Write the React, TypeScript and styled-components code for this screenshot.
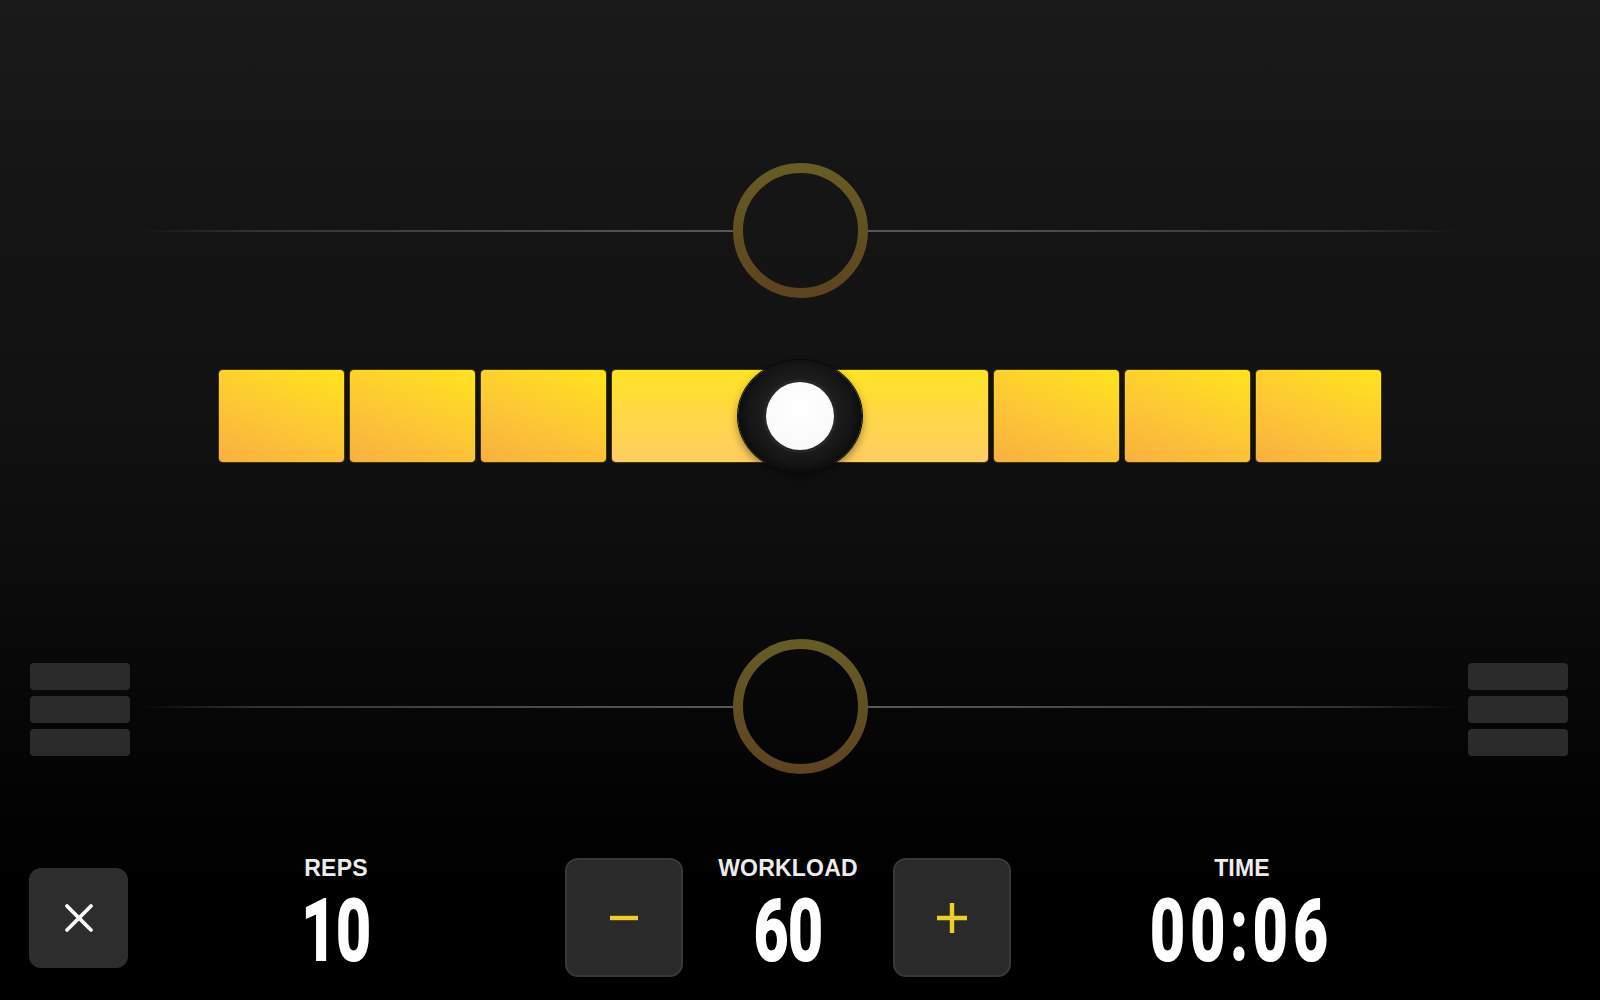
import React, { useId } from 'react';
import styled, { createGlobalStyle } from 'styled-components';

const GlobalStyle = createGlobalStyle`
  html, body {
    margin: 0;
    padding: 0;
    background: #000;
  }
  body {
    font-family: 'Liberation Sans', Arial, sans-serif;
  }
`;

const Screen = styled.main`
  width: 1600px;
  height: 1000px;
  overflow: hidden;
  display: flex;
  flex-direction: column;
  padding-top: 163px;
  box-sizing: border-box;
  background: linear-gradient(
    180deg,
    #1a1a1a 0%,
    #151515 18%,
    #121212 40%,
    #0d0d0d 55%,
    #070707 70%,
    #020202 82%,
    #000 90%
  );
`;

/* ring + guide line row */
const Track = styled.section<{ $offset?: number }>`
  display: grid;
  grid-template-columns: 140px 1fr 135px 1fr 140px;
  align-items: center;
  height: 135px;
  margin-top: ${p => p.$offset ?? 0}px;
`;

const GuideLine = styled.div<{ $side: 'left' | 'right' }>`
  height: 2px;
  background: linear-gradient(
    ${p => (p.$side === 'left' ? '90deg' : '270deg')},
    rgba(80, 80, 80, 0) 0%,
    #333 20%,
    #4c4c4c 70%,
    #585858 100%
  );
`;

const SideStack = styled.div<{ $side: 'left' | 'right' }>`
  display: flex;
  flex-direction: column;
  gap: 6px;
  width: 100px;
  justify-self: ${p => (p.$side === 'left' ? 'start' : 'end')};
  margin: ${p => (p.$side === 'left' ? '6px 0 0 30px' : '6px 32px 0 0')};
`;

const StackPlate = styled.div`
  height: 27px;
  border-radius: 4px;
  background: #2b2b2b;
`;

/* level bar */
const BarRow = styled.section`
  position: relative;
  display: flex;
  justify-content: center;
  align-items: center;
  gap: 6px;
  height: 112px;
  margin-top: 62px;
`;

const Segment = styled.div<{ $width: number; $active?: boolean }>`
  width: ${p => p.$width}px;
  height: 92px;
  border-radius: 4px;
  box-shadow: 0 0 0 1px rgba(110, 84, 10, 0.55);
  background: ${p =>
    p.$active
      ? 'linear-gradient(180deg, #ffe424 0%, #ffd64a 55%, #ffcd62 100%)'
      : 'linear-gradient(200deg, #ffe41c 0%, #fdc934 50%, #f8b040 100%)'};
`;

const Knob = styled.div`
  position: absolute;
  top: 0;
  left: 50%;
  transform: translateX(-50%);
  width: 124px;
  height: 112px;
  border-radius: 50%;
  display: flex;
  justify-content: center;
  align-items: center;
  background: radial-gradient(
    ellipse at 50% 48%,
    #242424 0,
    #1d1d1d 42%,
    #151515 60%,
    #0c0c0c 72%
  );
  box-shadow: 0 0 0 1px #0a0a0a, 0 4px 10px rgba(0, 0, 0, 0.45);
`;

const KnobDot = styled.div`
  width: 68px;
  height: 68px;
  border-radius: 50%;
  background: radial-gradient(circle at 50% 40%, #fff 0, #fafafa 70%, #ececec 100%);
  box-shadow: 0 0 0 3px #262626;
`;

/* footer */
const Footer = styled.footer`
  display: flex;
  align-items: center;
  height: 119px;
  margin-top: 84px;
  padding-left: 29px;
`;

const CloseButton = styled.button`
  width: 99px;
  height: 100px;
  border: none;
  border-radius: 12px;
  background: #2d2d2d;
  display: flex;
  justify-content: center;
  align-items: center;
  padding: 0;
`;

const StepButton = styled.button<{ $offset?: number }>`
  width: 118px;
  height: 119px;
  margin-left: ${p => p.$offset ?? 0}px;
  box-sizing: border-box;
  border: 2px solid #383838;
  border-radius: 13px;
  background: #2a2a2a;
  display: flex;
  justify-content: center;
  align-items: center;
  padding: 0;
`;

const Stat = styled.div<{ $width: number; $offset?: number }>`
  width: ${p => p.$width}px;
  margin-left: ${p => p.$offset ?? 0}px;
  display: flex;
  flex-direction: column;
  align-items: center;
`;

const StatLabel = styled.div`
  font-family: 'Liberation Sans', Arial, sans-serif;
  font-weight: 700;
  font-size: 23px;
  line-height: 23px;
  color: #ececec;
  letter-spacing: 0.2px;
  margin-top: -4px;
`;

const StatValue = styled.div<{ $spacing?: number }>`
  margin-top: 8px;
  font-family: Roboto, 'Liberation Sans', sans-serif;
  font-weight: 700;
  font-size: 86px;
  line-height: 86px;
  color: #fff;
  -webkit-text-stroke: 2.2px #fff;
  letter-spacing: ${p => p.$spacing ?? 0}px;
  transform: scaleX(0.7);
  white-space: nowrap;
`;

const Ring: React.FC = () => {
  const id = useId();
  return (
    <svg width="135" height="135" viewBox="0 0 135 135">
      <defs>
        <linearGradient id={id} x1="0" y1="0" x2="0" y2="1">
          <stop offset="0%" stopColor="#665c25" />
          <stop offset="100%" stopColor="#5e4321" />
        </linearGradient>
      </defs>
      <circle cx="67.5" cy="67.5" r="62.5" fill="none" stroke={`url(#${id})`} strokeWidth="10" />
    </svg>
  );
};

const CloseIcon = () => (
  <svg width="30" height="30" viewBox="0 0 30 30">
    <path d="M3 3 L27 27 M27 3 L3 27" stroke="#fff" strokeWidth="3.8" strokeLinecap="round" />
  </svg>
);

const MinusIcon = () => (
  <svg width="32" height="32" viewBox="0 0 32 32">
    <path d="M2 16 H30" stroke="#ecd027" strokeWidth="4.4" />
  </svg>
);

const PlusIcon = () => (
  <svg width="32" height="32" viewBox="0 0 32 32">
    <path d="M1 16 H31 M16 1 V31" stroke="#ecd027" strokeWidth="4.4" />
  </svg>
);

const segments = [
  { width: 125 },
  { width: 125 },
  { width: 125 },
  { width: 185, active: true },
  { width: 185, active: true },
  { width: 125 },
  { width: 125 },
  { width: 125 },
];

export default function App() {
  return (
    <>
      <GlobalStyle />
      <Screen>
        <Track>
          <span />
          <GuideLine $side="left" />
          <Ring />
          <GuideLine $side="right" />
          <span />
        </Track>

        <BarRow>
          {segments.map((s, i) => (
            <Segment key={i} $width={s.width} $active={s.active} />
          ))}
          <Knob>
            <KnobDot />
          </Knob>
        </BarRow>

        <Track $offset={167}>
          <SideStack $side="left">
            <StackPlate />
            <StackPlate />
            <StackPlate />
          </SideStack>
          <GuideLine $side="left" />
          <Ring />
          <GuideLine $side="right" />
          <SideStack $side="right">
            <StackPlate />
            <StackPlate />
            <StackPlate />
          </SideStack>
        </Track>

        <Footer>
          <CloseButton aria-label="Close">
            <CloseIcon />
          </CloseButton>
          <Stat $width={160} $offset={128}>
            <StatLabel>REPS</StatLabel>
            <StatValue>10</StatValue>
          </Stat>
          <StepButton $offset={149} aria-label="Decrease">
            <MinusIcon />
          </StepButton>
          <Stat $width={210}>
            <StatLabel>WORKLOAD</StatLabel>
            <StatValue>60</StatValue>
          </Stat>
          <StepButton aria-label="Increase">
            <PlusIcon />
          </StepButton>
          <Stat $width={240} $offset={111}>
            <StatLabel>TIME</StatLabel>
            <StatValue $spacing={8}>00:06</StatValue>
          </Stat>
        </Footer>
      </Screen>
    </>
  );
}
